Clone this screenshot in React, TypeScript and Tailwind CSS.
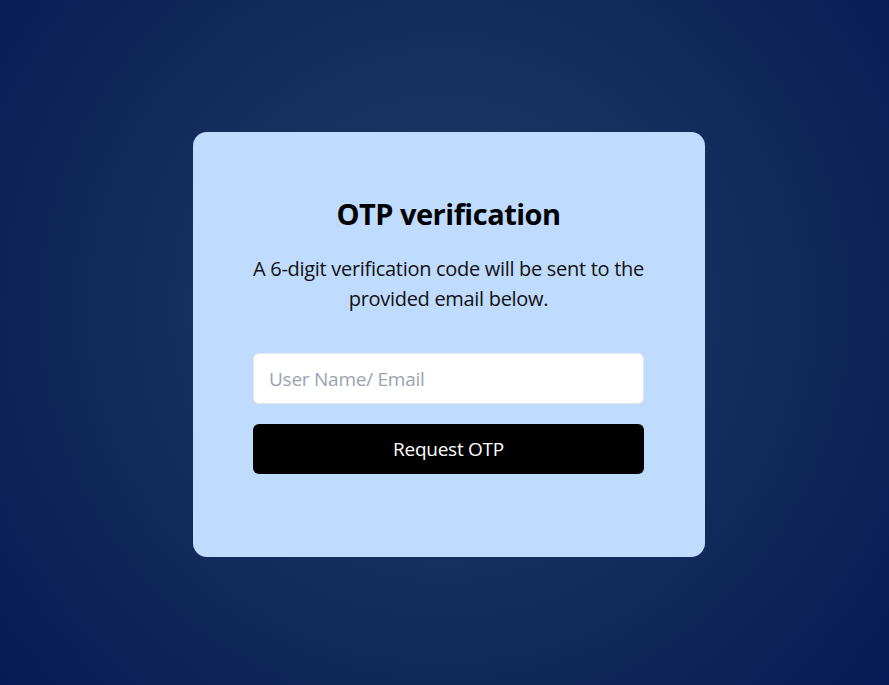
export default function App() {
  return (
    <div
      className="w-[889px] h-[685px] flex items-center justify-center bg-[radial-gradient(circle_at_50%_45%,#1e3666_0%,#17305f_40%,#0b2056_85%,#061b55_100%)]"
      style={{ fontFamily: '"Open Sans", "Noto Sans", sans-serif' }}
    >
      <div className="ml-[8px] mt-[4px] w-[512px] h-[425px] rounded-[14px] bg-[#bfdbfe] px-[60px] pt-[62px] flex flex-col items-center">
        <h1 className="text-[29px] leading-[40px] font-bold text-black tracking-[-0.5px]">OTP verification</h1>
        <p className="mt-[20px] -mx-[10px] whitespace-nowrap text-[20px] leading-[30px] text-[#111] text-center tracking-[-0.3px]">
          A 6-digit verification code will be sent to the
          <br />
          provided email below.
        </p>
        <input
          className="mt-[39px] w-[391px] h-[51px] rounded-[6px] bg-white border border-[#e5e7eb] px-[15px] text-[19px] outline-none placeholder:text-[#9ca3af] tracking-[-0.25px]"
          placeholder="User Name/ Email"
        />
        <button className="mt-[20px] w-[391px] h-[50px] rounded-[6px] bg-black text-white text-[19px] tracking-[-0.25px]">
          Request OTP
        </button>
      </div>
    </div>
  );
}
